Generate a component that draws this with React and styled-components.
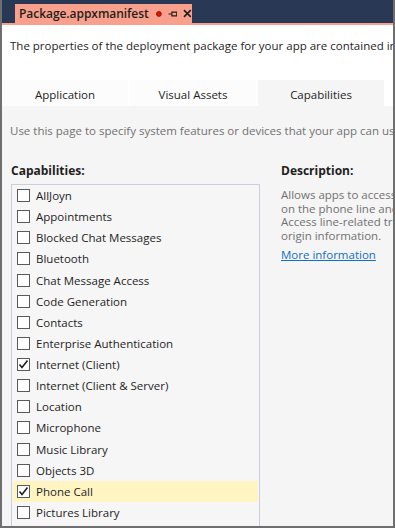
import React from "react";
import styled, { createGlobalStyle } from "styled-components";

const Global = createGlobalStyle`
  html, body { margin: 0; padding: 0; background: #ffffff; }
  body { font-family: "Open Sans", "Noto Sans", sans-serif; }
`;

const Window = styled.div`
  width: 395px;
  height: 528px;
  box-sizing: border-box;
  border-left: 2px solid #6f6f6f;
  border-right: 2px solid #6f6f6f;
  border-bottom: 2px solid #6f6f6f;
  overflow: hidden;
  display: flex;
  flex-direction: column;
  background: #ffffff;
  font-size: 11.5px;
  color: #1e1e1e;
`;

const TitleBar = styled.div`
  height: 23px;
  background: #293955;
  display: flex;
  align-items: flex-end;
  padding-left: 13px;
  flex-shrink: 0;
`;

const DocTab = styled.div`
  height: 19px;
  width: 177px;
  box-sizing: border-box;
  background: #f9a08c;
  display: flex;
  align-items: center;
  padding-left: 4px;
  gap: 6px;
`;

const DocTitle = styled.span`
  font-weight: 600;
  font-size: 12px;
  color: #1e1e1e;
  white-space: nowrap;
  letter-spacing: -0.05px;
  margin-right: 1px;
`;

const Accent = styled.div`
  height: 2px;
  background: #f9a08c;
  flex-shrink: 0;
`;

const Intro = styled.div`
  padding: 13px 0 0 8px;
  height: 20px;
  line-height: 16px;
  white-space: nowrap;
  color: #1e1e1e;
`;

const TabStrip = styled.div`
  display: flex;
  gap: 2px;
  margin-top: 26px;
  height: 26px;
  flex-shrink: 0;
`;

const Tab = styled.div`
  width: 126px;
  display: flex;
  align-items: center;
  justify-content: center;
  padding-top: 2px;
  box-sizing: border-box;
  background: ${(p) => (p.$active ? "#f5f5f5" : "#fcfcfc")};
  color: #1e1e1e;
`;

const Panel = styled.div`
  flex: 1;
  background: #f5f5f5;
  padding: 17px 0 0 8px;
  display: flex;
  flex-direction: column;
`;

const Hint = styled.div`
  color: #717171;
  white-space: nowrap;
  line-height: 16px;
`;

const Columns = styled.div`
  display: flex;
  gap: 21px;
  margin-top: 24px;
`;

const LeftCol = styled.div`
  width: 249px;
  flex-shrink: 0;
  margin-left: 1px;
`;

const RightCol = styled.div`
  flex: 1;
  min-width: 0;
`;

const Heading = styled.div`
  font-weight: 700;
  font-size: 12px;
  line-height: 16px;
  height: 16px;
  margin-bottom: 5px;
  color: #1e1e1e;
`;

const ListBox = styled.div`
  border: 1px solid #cccedb;
  height: 400px;
  background: #f6f6f6;
`;

const Row = styled.div`
  height: 21.13px;
  margin: 0 1px;
  display: flex;
  align-items: center;
  gap: 6px;
  padding-left: 4px;
  background: ${(p) => (p.$selected ? "#fff5c3" : "transparent")};
  white-space: nowrap;
`;

const Box = styled.div`
  width: 13px;
  height: 13px;
  box-sizing: border-box;
  border: 1px solid #5a5a5a;
  background: #ffffff;
  display: flex;
  align-items: center;
  justify-content: center;
  flex-shrink: 0;
`;

const Desc = styled.div`
  margin-top: 9px;
  color: #717171;
  line-height: 13.6px;
  white-space: nowrap;
`;

const Link = styled.a`
  display: block;
  margin-top: 6px;
  color: #0e70c0;
  text-decoration: underline;
  line-height: 14px;
  white-space: nowrap;
`;

const Check = () => (
  <svg width="11" height="11" viewBox="0 0 11 11">
    <path d="M1.5 5.5 L4 8.5 L9.5 1.5" fill="none" stroke="#1e1e1e" strokeWidth="1.6" />
  </svg>
);

const Dot = () => (
  <svg width="6" height="6" viewBox="0 0 6 6">
    <circle cx="3" cy="3" r="2.5" fill="#e51400" stroke="#7a0a00" strokeWidth="0.8" />
  </svg>
);

const Pin = () => (
  <svg width="10" height="10" viewBox="0 0 10 10">
    <path d="M0.5 5 H4 M4 2.5 V7.5 M4 3 H9 V7 H4" fill="none" stroke="#1e1e1e" strokeWidth="1.2" />
  </svg>
);

const Close = () => (
  <svg width="9" height="9" viewBox="0 0 9 9">
    <path d="M1 1 L8 8 M8 1 L1 8" stroke="#1e1e1e" strokeWidth="1.6" />
  </svg>
);

const caps = [
  ["AllJoyn"],
  ["Appointments"],
  ["Blocked Chat Messages"],
  ["Bluetooth"],
  ["Chat Message Access"],
  ["Code Generation"],
  ["Contacts"],
  ["Enterprise Authentication"],
  ["Internet (Client)", true],
  ["Internet (Client & Server)"],
  ["Location"],
  ["Microphone"],
  ["Music Library"],
  ["Objects 3D"],
  ["Phone Call", true, true],
  ["Pictures Library"],
];

export default function App() {
  return (
    <>
      <Global />
      <Window>
        <TitleBar>
          <DocTab>
            <DocTitle>Package.appxmanifest</DocTitle>
            <Dot />
            <Pin />
            <Close />
          </DocTab>
        </TitleBar>
        <Accent />
        <Intro>
          The properties of the deployment package for your app are contained in
        </Intro>
        <TabStrip>
          <Tab>Application</Tab>
          <Tab>Visual Assets</Tab>
          <Tab $active>Capabilities</Tab>
        </TabStrip>
        <Panel>
          <Hint>Use this page to specify system features or devices that your app can use.</Hint>
          <Columns>
            <LeftCol>
              <Heading>Capabilities:</Heading>
              <ListBox>
                {caps.map(([name, checked, selected]) => (
                  <Row key={name} $selected={selected}>
                    <Box>{checked && <Check />}</Box>
                    {name}
                  </Row>
                ))}
              </ListBox>
            </LeftCol>
            <RightCol>
              <Heading>Description:</Heading>
              <Desc>
                Allows apps to access
                <br />
                on the phone line and
                <br />
                Access line-related tri
                <br />
                origin information.
              </Desc>
              <Link href="#">More information</Link>
            </RightCol>
          </Columns>
        </Panel>
      </Window>
    </>
  );
}
